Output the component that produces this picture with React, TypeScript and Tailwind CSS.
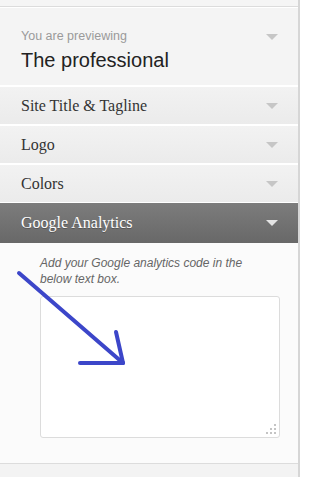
import React from 'react';

const sections = ['Site Title & Tagline', 'Logo', 'Colors'];

function Caret({ dark = false }: { dark?: boolean }) {
  return (
    <span
      className={`block w-0 h-0 border-l-[6px] border-r-[6px] border-t-[6px] border-l-transparent border-r-transparent ${
        dark ? 'border-t-[#e4e4e4]' : 'border-t-[#c6c6c6]'
      }`}
    />
  );
}

export default function App() {
  return (
    <div className="relative w-[310px] h-[477px] bg-white overflow-hidden font-['Liberation_Sans',Arial,sans-serif]">
      <div className="w-[300px] h-full bg-[#f3f3f3] border-r-2 border-[#d6d6d6] flex flex-col">
        {/* previous row cut off */}
        <div className="h-[7px] shrink-0 bg-[#f5f5f5] border-b border-[#dcdcdc]" />

        {/* preview */}
        <div className="h-[79px] shrink-0 bg-[#f4f4f4] border-t border-white border-b border-[#dcdcdc] flex justify-between pl-[21px] pr-[20px] pt-[20px]">
          <div>
            <p className="text-[12.5px] leading-[16px] text-[#9a9a9a]">You are previewing</p>
            <p className="text-[20px] leading-[26px] mt-[3px] text-[#222]">The professional</p>
          </div>
          <div className="pt-[6px]">
            <Caret />
          </div>
        </div>

        {/* sections */}
        {sections.map((label) => (
          <div
            key={label}
            className="h-[39px] shrink-0 flex items-center justify-between pl-[21px] pr-[20px] bg-gradient-to-b from-[#f2f2f2] to-[#ebebeb] border-t border-white border-b border-[#dcdcdc]"
          >
            <span className="font-['Liberation_Serif',Georgia,serif] text-[16px] text-[#333]">{label}</span>
            <Caret />
          </div>
        ))}

        {/* open section */}
        <div className="h-[40px] shrink-0 flex items-center justify-between pl-[21px] pr-[20px] bg-gradient-to-b from-[#7c7c7c] to-[#686868]">
          <span className="font-['Liberation_Serif',Georgia,serif] text-[16px] text-white [text-shadow:0_1px_0_#555]">
            Google Analytics
          </span>
          <Caret dark />
        </div>

        <div className="bg-[#fbfbfb] border-b border-[#dcdcdc] pl-[40px] pr-[18px] pt-[12px] pb-[25px]">
          <p className="italic text-[12px] leading-[16px] text-[#666] max-w-[225px]">
            Add your Google analytics code in the below text box.
          </p>
          <div className="relative mt-[9px] w-[240px] h-[142px] bg-white border border-[#dcdcdc] rounded-[3px]">
            {/* resize grip */}
            <svg className="absolute right-[3px] bottom-[3px]" width="10" height="10" viewBox="0 0 10 10">
              <g fill="#c4c4c4">
                <rect x="8" y="0" width="2" height="2" />
                <rect x="4" y="4" width="2" height="2" />
                <rect x="8" y="4" width="2" height="2" />
                <rect x="0" y="8" width="2" height="2" />
                <rect x="4" y="8" width="2" height="2" />
                <rect x="8" y="8" width="2" height="2" />
              </g>
            </svg>
          </div>
        </div>
      </div>

      {/* hand-drawn annotation arrow */}
      <svg className="absolute left-0 top-0 pointer-events-none" width="310" height="477" viewBox="0 0 310 477">
        <g stroke="#3c46c9" strokeWidth="4" strokeLinecap="round" fill="none">
          <path d="M19 273 L123 363" />
          <path d="M116 332 L123 363" />
          <path d="M80 363 L123 363" />
        </g>
      </svg>
    </div>
  );
}
